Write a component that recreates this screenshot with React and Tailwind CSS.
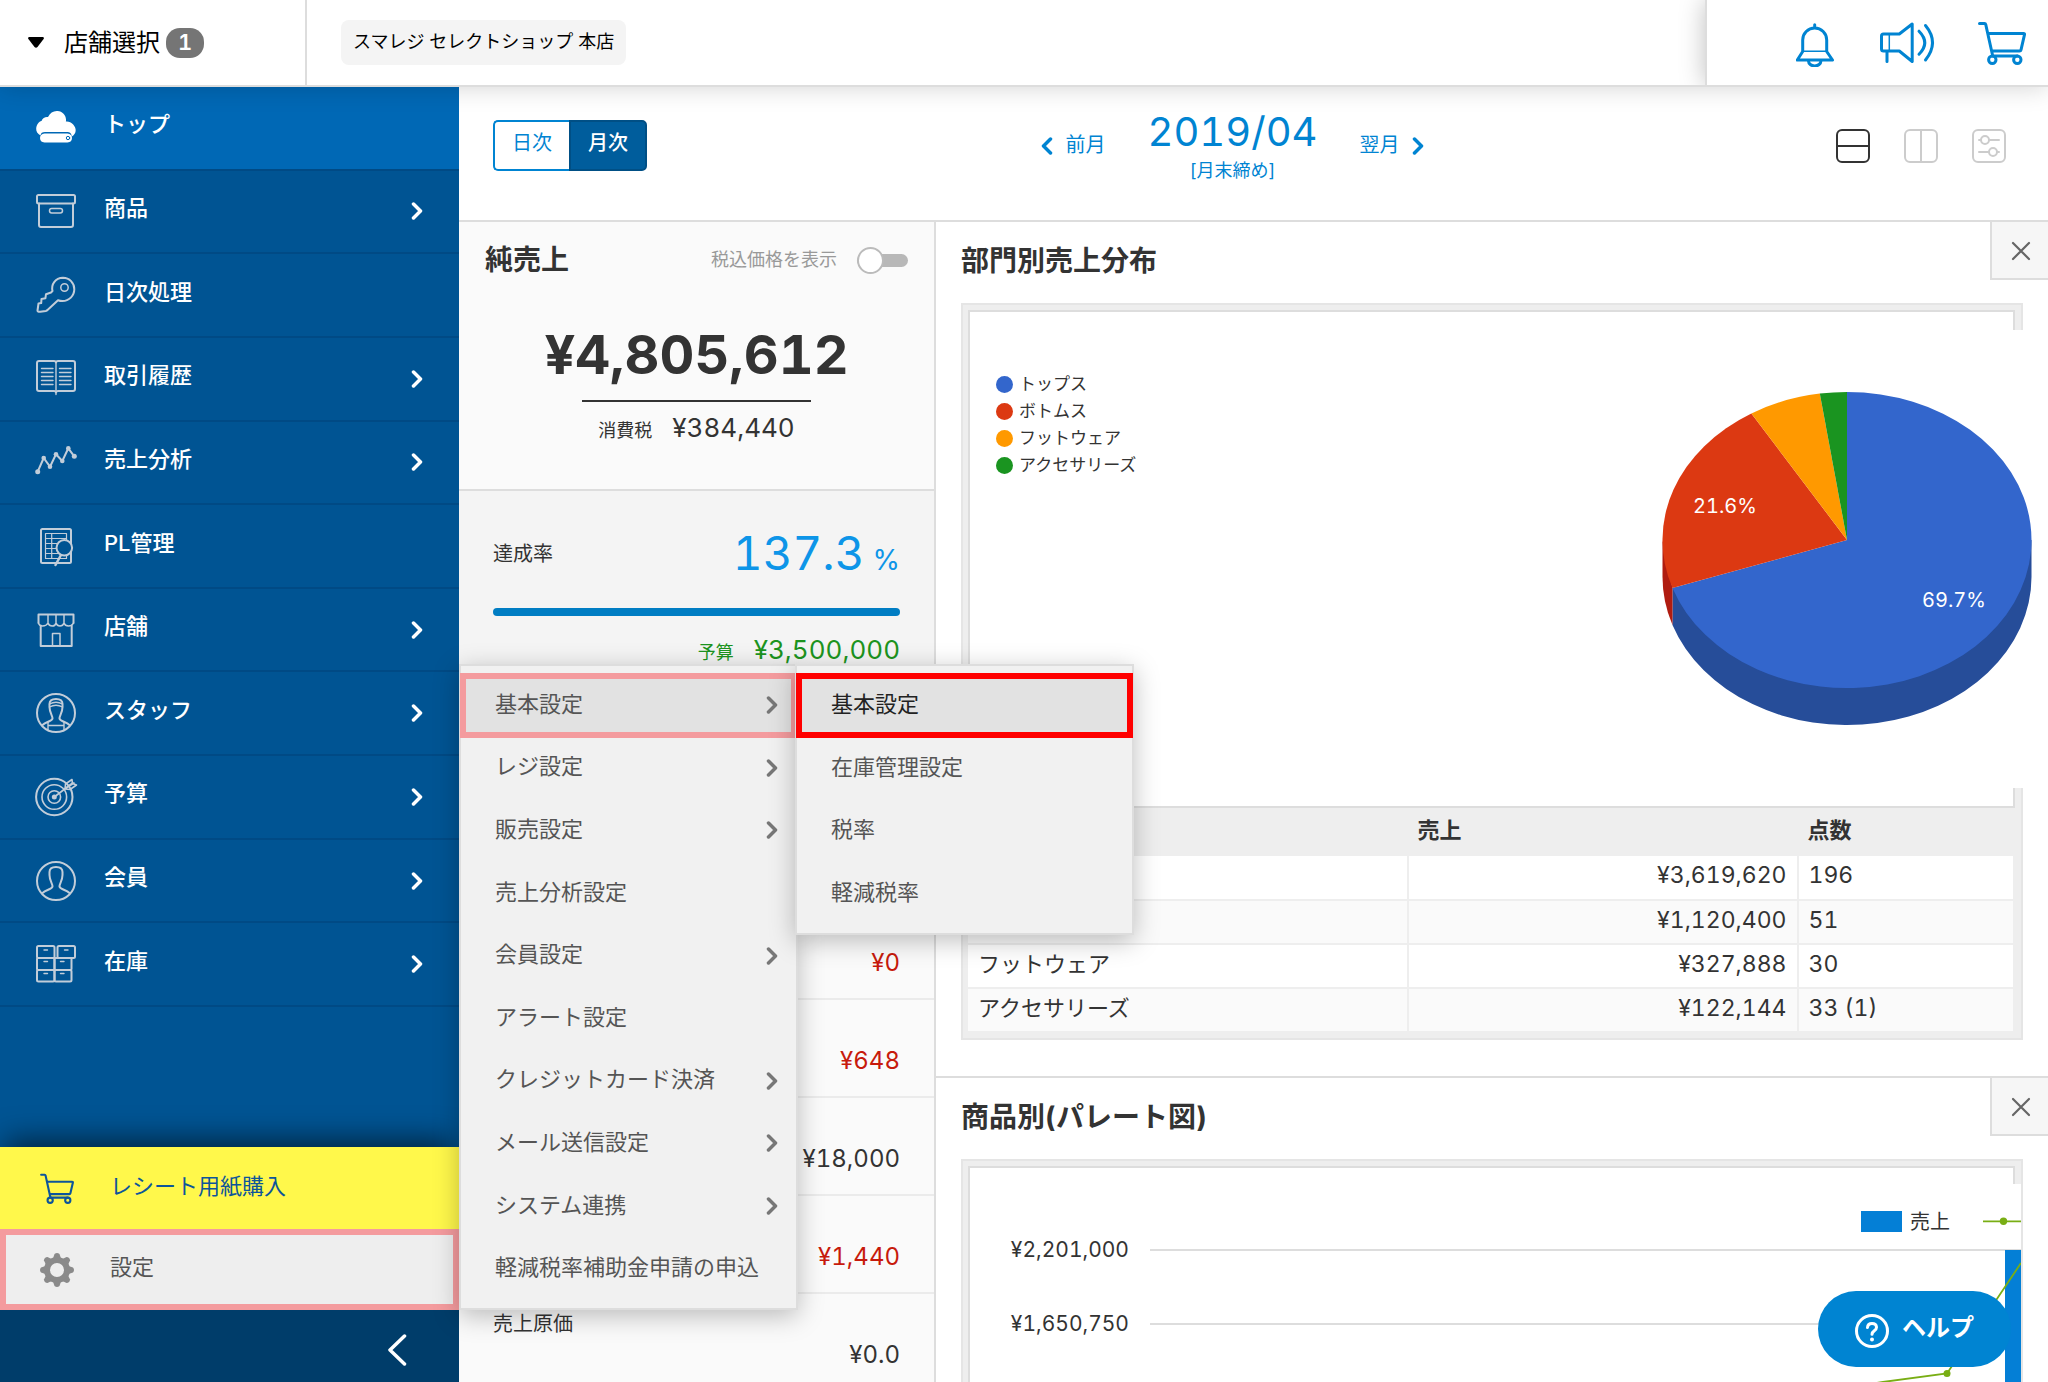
import React, { useState } from "react";

const CartIcon = ({ className }) => (
  <svg viewBox="0 0 48 44" className={className} fill="none" stroke="currentColor" strokeWidth="3" strokeLinecap="round" strokeLinejoin="round">
    <path d="M1.500 2.500h5q1 0 1.300 1.200L14.500 34M11 12.500h34.500q1.300 0 1 1.200L43 28.800q-.3 1.200-1.500 1.200H14M14.500 35h25" />
    <circle cx="14.300" cy="38.700" r="3.700" />
    <circle cx="39.300" cy="38.700" r="3.700" />
  </svg>
);

const BellIcon = () => (
  <svg viewBox="0 0 38 44" className="h-11 w-[38px]" fill="none" stroke="currentColor" strokeWidth="3" strokeLinecap="round" strokeLinejoin="round">
    <path d="M18.700 1.800v2.500M6.700 28.500V17a12 12 0 0 1 24 0v11.500l5.800 8.500H1.300z" />
    <path d="M7 28.300h23.500" strokeWidth="1.500" />
    <path d="M12.500 38a6.200 5 0 0 0 12.400 0" />
  </svg>
);

const SpeakerIcon = () => (
  <svg viewBox="0 0 54 42" className="h-[42px] w-[54px] overflow-visible" fill="none" stroke="currentColor" strokeWidth="3" strokeLinecap="round" strokeLinejoin="round">
    <path d="M20.300 12H4.500q-2 0-2 2v13q0 2 2 2h15.800l12.900 10.500V2zM8 30v9.500" />
    <path d="M10.300 12v17" strokeWidth="1.500" />
    <path d="M40 9.200q11.500 11.500 0 23M46.500 3.500q14 17 0 34.500" />
  </svg>
);

const Chevron = ({ className, width = 3.5 }) => (
  <svg viewBox="0 0 12 18" className={className} fill="none" stroke="currentColor" strokeWidth={width} strokeLinecap="round" strokeLinejoin="round">
    <path d="M2.500 2L9.500 9l-7 7" />
  </svg>
);

const icons = {
  top: (
    <g stroke="none" fill="#fff" transform="translate(0 3)">
      <path d="M4.500 24.500C1.500 22.800 0 20.500.2 17.500.5 13.500 3 10.500 5.500 10 6.500 7 9.500 5.500 12 6c2-4.300 5.500-6.300 9.500-6 5 .4 8.300 4 8.500 8.500 0 .8 0 1.300-.1 2 2.500-.3 5.300.6 7.300 3 3.800 4.300 3.200 9.300-1.400 12-.3-3.200-2-4.500-4.300-4.500H9c-2.700 0-4.200 1-4.500 3.500z" />
      <path d="M8.500 22.500h23q4.500.5 4.500 4.500t-4.500 4.500h-23Q4 31 4 27t4.500-4.500z" />
      <circle cx="32" cy="27" r="1.700" fill="none" stroke="#0068b5" strokeWidth="1" />
    </g>
  ),
  items: (
    <>
      <rect x="1" y="4" width="38" height="8.500" rx="1.500" />
      <path d="M3 12.500V34q0 2 2 2h30q2 0 2-2V12.500" />
      <rect x="13.500" y="17.500" width="13" height="4.500" rx="2.200" strokeWidth="1.500" />
    </>
  ),
  key: (
    <>
      <path d="M1.500 35.500l1-7 2.700-.4.300-4.200 3.900-.6.600-4.100 5-1.700 1.500-1.500C15 9.500 19 3 27 2.800c6.500 0 11.300 5 11.300 11.500S33 26 26.500 26c-2 0-3-.2-4.500-.8L11.500 35q-.6.700-1.700.9l-5.600.8q-2.700.3-2.700-1.200z" />
      <circle cx="28.500" cy="12.500" r="3.700" strokeWidth="1.500" />
    </>
  ),
  book: (
    <>
      <path d="M20 3.500Q20 2 18 2H3Q1 2 1 4v26q0 2 2 2h15q2 0 2 1.500Q20 32 22 32h15q2 0 2-2V4q0-2-2-2H22q-2 0-2 1.500z" />
      <path d="M20 3v32.500M5.500 9.500h11.500M5.500 13.500h11.500M5.500 17.500h11.500M5.500 21.500h11.500M5.500 25.500h11.500M23.500 9.500H35M23.500 13.500H35M23.500 17.500H35M23.500 21.500H35M23.500 25.500H35" strokeWidth="1.400" />
    </>
  ),
  trend: (
    <>
      <path d="M1.700 29.700L7.700 16 14 24.700l6-12.400 6.300 6.700 6-12.700 6 8" />
      <g fill="currentColor" stroke="none">
        <circle cx="1.700" cy="29.700" r="2.500" />
        <circle cx="7.700" cy="16" r="2.300" />
        <circle cx="14" cy="24.700" r="2.300" />
        <circle cx="20" cy="12.300" r="2.300" />
        <circle cx="26.300" cy="19" r="2.300" />
        <circle cx="32.300" cy="6.300" r="2.300" />
        <circle cx="38.300" cy="14.300" r="2.500" />
      </g>
    </>
  ),
  pl: (
    <>
      <rect x="5" y="3" width="30" height="34" rx="1.500" />
      <path d="M9.500 7.500h21v25h-21zM15.700 7.500v25M9.500 12.500h21M9.500 17.500h21M9.500 22.500h21M9.500 27.500h21" strokeWidth="1.200" />
      <circle cx="28.300" cy="21.700" r="7.800" fill="#005493" />
      <path d="M24.700 29.500L19.500 39" strokeWidth="2.500" />
    </>
  ),
  shop: (
    <>
      <path d="M2.500 13V4.500h35V13M4.700 15.500V36h31V15.500" />
      <path d="M2.500 13q.5 3 4 3 4 0 5.500-3 1 3 4.200 3T20 13q1 3 4 3t4-3q1 3 4.500 3t5-3M12 5v8M20 5v8M28 5v8M16.500 36V23.500h7.500V36" strokeWidth="1.500" />
    </>
  ),
  staff: (
    <>
      <circle cx="20" cy="20" r="19" />
      <path d="M6.500 32c3.500-3.500 9.500-3.500 10-6.500.3-2.500-3-5.500-3-11.500v-3c0-3.500 2.500-5 6.500-5s6.500 1.500 6.500 5v3c0 6-3.300 9-3 11.500.5 3 6.500 3 10 6.500" />
      <path d="M13.500 14q6.500-3.500 13 0M13.500 11q6.500-3.500 13 0M12 29v8.500M28 29v8.500M12 32.500h16" strokeWidth="1.400" />
    </>
  ),
  target: (
    <>
      <circle cx="18.300" cy="20" r="18.200" />
      <circle cx="18.300" cy="20" r="12.300" strokeWidth="1.600" />
      <circle cx="18.300" cy="20" r="6.300" strokeWidth="1.600" />
      <circle cx="18.300" cy="20" r="2.500" fill="currentColor" stroke="none" />
      <path d="M18.300 20L36.500 6" strokeWidth="1.600" />
      <path d="M29 12l.5-5L36 2.500l.5 4 4 1.500L34 12.500zM30 11l8-5" strokeWidth="1.600" />
    </>
  ),
  member: (
    <>
      <circle cx="20" cy="20" r="19" />
      <path d="M6.500 32c3.500-3.500 9.500-3.500 10-6.500.3-2.500-3-5.500-3-11.500v-3c0-3.500 2.500-5 6.500-5s6.500 1.500 6.500 5v3c0 6-3.300 9-3 11.500.5 3 6.500 3 10 6.500" />
    </>
  ),
  stock: (
    <>
      <rect x="1" y="2" width="17.500" height="12" rx="1.500" />
      <rect x="21.500" y="2" width="17.500" height="12" rx="1.500" />
      <rect x="1" y="14" width="17.500" height="12" rx="1" />
      <rect x="18.500" y="14" width="17" height="12" rx="1" />
      <rect x="1" y="26" width="17.500" height="11.500" rx="1.500" />
      <rect x="18.500" y="26" width="17" height="11.500" rx="1.500" />
      <path d="M8 6h3.500M28.500 6H32M8 17.500h3.500M24.500 17.500H28M8 29.500h3.500M24.500 29.500H28" strokeWidth="1.400" />
    </>
  )
};

const NAV = [
  { id: "top", text: "トップ", active: true },
  { id: "items", text: "商品", sub: true },
  { id: "key", text: "日次処理" },
  { id: "book", text: "取引履歴", sub: true },
  { id: "trend", text: "売上分析", sub: true },
  { id: "pl", text: "PL管理" },
  { id: "shop", text: "店舗", sub: true },
  { id: "staff", text: "スタッフ", sub: true },
  { id: "target", text: "予算", sub: true },
  { id: "member", text: "会員", sub: true },
  { id: "stock", text: "在庫", sub: true }
];

const SETTINGS = [
  { text: "基本設定", sub: true },
  { text: "レジ設定", sub: true },
  { text: "販売設定", sub: true },
  { text: "売上分析設定" },
  { text: "会員設定", sub: true },
  { text: "アラート設定" },
  { text: "クレジットカード決済", sub: true },
  { text: "メール送信設定", sub: true },
  { text: "システム連携", sub: true },
  { text: "軽減税率補助金申請の申込" }
];

const BASIC = ["基本設定", "在庫管理設定", "税率", "軽減税率"];

const SUMMARY = [
  { value: "¥0", minus: true },
  { value: "¥648", minus: true },
  { value: "¥18,000" },
  { value: "¥1,440", minus: true },
  { label: "売上原価", value: "¥0.0" }
];

const DEPARTMENTS = [
  { name: "トップス", sales: 3619620, count: "196", color: "#3366cc", side: "#264d99" },
  { name: "ボトムス", sales: 1120400, count: "51", color: "#dc3912", side: "#b01c10" },
  { name: "フットウェア", sales: 327888, count: "30", color: "#ff9900", side: "#bf7300" },
  { name: "アクセサリーズ", sales: 122144, count: "33 (1)", color: "#1a9420", side: "#0c7012" }
];

function Header() {
  return (
    <header className="relative z-20 flex h-[87px] shrink-0 items-stretch border-b-2 border-[#ddd] bg-white shadow-[0_0_24px_rgba(0,0,0,0.18)]">
      <button className="flex w-[307px] items-center border-r-2 border-[#ddd] pl-7 text-2xl text-black">
        <svg viewBox="0 0 16 11" className="h-[11px] w-4"><path d="M1 0h14q1.500.5.6 2L9.500 10q-1.500 1.500-3 0L.4 2Q-.5.5 1 0z" /></svg>
        <span className="ml-5">店舗選択</span>
        <span className="ml-1.5 flex h-[30px] w-[38px] items-center justify-center rounded-[14px] bg-[#757575] text-[22px] font-semibold text-white">1</span>
      </button>
      <div className="flex flex-1 items-center overflow-hidden pl-[34px]">
        <span className="rounded-lg bg-[#f4f4f4] px-3 pt-2 pb-[9px] text-lg leading-7 text-black">スマレジ セレクトショップ 本店</span>
      </div>
      <div className="flex w-[343px] items-center justify-end gap-[45px] border-l-2 border-[#ddd] pr-[22px] text-[#0084d2] shadow-[0_0_24px_rgba(0,0,0,0.25)] [clip-path:inset(0_0_0_-30px)]">
        <button aria-label="お知らせ" className="pt-1"><BellIcon /></button>
        <button aria-label="アナウンス"><SpeakerIcon /></button>
        <button aria-label="カート"><CartIcon className="h-11 w-12" /></button>
      </div>
    </header>
  );
}

function SettingsMenu() {
  return (
    <div className="absolute bottom-0 left-full w-[339px] border-2 border-[#ddd] bg-[#f1f1f1] py-2 text-[22px] text-[#555] shadow-[0_6px_24px_rgba(0,0,0,0.25)]">
      <ul className="flex h-[626px] flex-col">
        {SETTINGS.map((s, i) => (
          <li key={s.text} className="flex flex-1">
            <a href="#" className={`flex flex-1 items-center justify-between pr-[18px] pl-[34px] ${i === 0 ? "bg-[#e2e2e2] outline-[6px] -outline-offset-[5px] outline-[#f49b9e]" : ""}`}>
              <span className="pb-0.5 whitespace-nowrap">{s.text}</span>
              {s.sub && <Chevron className="h-[18px] w-3 text-[#777]" />}
            </a>
          </li>
        ))}
      </ul>
      <div className="absolute -top-0.5 left-full -ml-px w-[339px] border-2 border-[#ddd] bg-[#f1f1f1] py-2 shadow-[0_6px_24px_rgba(0,0,0,0.25)]">
        <ul className="flex h-[251px] flex-col">
          {BASIC.map((text, i) => (
            <li key={text} className="flex flex-1">
              <a href="#" className={`flex flex-1 items-center pb-0.5 pl-[34px] ${i === 0 ? "bg-[#e2e2e2] text-[#222] outline-[6px] -outline-offset-[5px] outline-[#f00]" : ""}`}>{text}</a>
            </li>
          ))}
        </ul>
      </div>
    </div>
  );
}

function Sidebar() {
  return (
    <aside className="relative z-10 flex w-[459px] shrink-0 flex-col bg-[#005493] text-[22px]">
      <ul className="flex h-[920px] shrink-0 flex-col">
        {NAV.map(n => (
          <li key={n.id} className={`flex flex-1 border-b-2 border-[#004a85] ${n.active ? "bg-[#0068b5]" : ""}`}>
            <a href="#" className="flex flex-1 items-center pr-9 pl-9 font-medium text-white">
              <svg viewBox="0 0 40 40" className="h-10 w-10 overflow-visible text-[#c2cdd9]" fill="none" stroke="currentColor" strokeWidth="2" strokeLinecap="round" strokeLinejoin="round">
                {icons[n.id]}
              </svg>
              <span className="ml-7 flex-1 pb-1.5">{n.text}</span>
              {n.sub && <Chevron className="h-[18px] w-3" />}
            </a>
          </li>
        ))}
      </ul>
      <div className="flex-1" />
      <a href="#" className="flex h-[82px] items-center bg-[#fff84b] pl-10 text-[#0d559a] shadow-[0_-12px_30px_-6px_rgba(0,0,0,0.6)]">
        <CartIcon className="h-[31px] w-[34px]" />
        <span className="ml-9 pb-1">レシート用紙購入</span>
      </a>
      <div className="relative">
        <a href="#" className="flex h-[81px] items-center border-[6px] border-[#f49b9e] bg-[#eee] pl-[34px] text-[#555]">
          <svg viewBox="-17 -17 34 34" className="h-[34px] w-[34px] text-[#8a8a8a]" fill="none" stroke="currentColor">
            <circle r="10" strokeWidth="6" />
            {[0, 45, 90, 135, 180, 225, 270, 315].map(a => (
              <path key={a} d="M-4-11.500L-2.500-16q2.500-2 5 0L4-11.500z" fill="currentColor" stroke="none" transform={`rotate(${a})`} />
            ))}
          </svg>
          <span className="ml-9 pb-1">設定</span>
        </a>
        <SettingsMenu />
      </div>
      <div className="flex h-[72px] items-center justify-end bg-[#003d6a] pr-[52px] pt-2">
        <button aria-label="メニューを閉じる">
          <svg viewBox="0 0 20 32" className="h-8 w-5" fill="none" stroke="#fff" strokeWidth="3.500" strokeLinecap="round" strokeLinejoin="round"><path d="M17.500 2L3 16l14.500 14" /></svg>
        </button>
      </div>
    </aside>
  );
}

function Toolbar() {
  return (
    <div className="grid h-[135px] shrink-0 grid-cols-[1fr_auto_1fr] border-b-2 border-[#ddd] pr-[42px] text-[#0084d2]">
      <div className="pt-[33px] pl-[34px]">
        <div className="flex h-[51px] w-[154px] text-xl">
          <button className="flex-1 rounded-l-[5px] border-2 border-r-0 border-[#0084d2] pb-1.5">日次</button>
          <button className="flex-1 rounded-r-[5px] border-2 border-[#004f85] bg-[#005d9c] pb-1.5 font-medium text-white">月次</button>
        </div>
      </div>
      <div className="flex items-start">
        <a href="#" className="mt-11 flex items-center text-xl">
          <Chevron className="h-[18px] w-3 rotate-180" />
          <span className="ml-3 pb-0.5">前月</span>
        </a>
        <div className="mx-[42px] pt-6 text-center">
          <div className="text-[40px] leading-[42px]">2019/04</div>
          <div className="mt-1.5 text-lg leading-6">[月末締め]</div>
        </div>
        <a href="#" className="mt-11 flex items-center text-xl">
          <span className="mr-3 pb-0.5">翌月</span>
          <Chevron className="h-[18px] w-3" />
        </a>
      </div>
      <div className="flex items-start justify-end gap-[34px] pt-[42px]">
        <button aria-label="1列表示">
          <svg viewBox="0 0 34 34" className="h-[34px] w-[34px]" fill="none" stroke="#333" strokeWidth="2"><rect x="1" y="1" width="32" height="32" rx="5" /><path d="M1 17h32" /></svg>
        </button>
        <button aria-label="2列表示">
          <svg viewBox="0 0 34 34" className="h-[34px] w-[34px]" fill="none" stroke="#ccc" strokeWidth="2"><rect x="1" y="1" width="32" height="32" rx="5" /><path d="M17 1v32" /></svg>
        </button>
        <button aria-label="表示設定">
          <svg viewBox="0 0 34 34" className="h-[34px] w-[34px]" fill="none" stroke="#ccc" strokeWidth="2" strokeLinecap="round"><rect x="1" y="1" width="32" height="32" rx="5" /><path d="M7 11h2M17 11h10M7 23h10M25 23h2" /><circle cx="13" cy="11" r="4" /><circle cx="21" cy="23" r="4" /></svg>
        </button>
      </div>
    </div>
  );
}

function SalesColumn() {
  const [withTax, setWithTax] = useState(false);
  return (
    <section className="w-[477px] shrink-0 border-r-2 border-[#ddd] bg-[#fafafa] text-[#333]">
      <div className="h-[269px] border-b-2 border-[#ddd] pt-5">
        <div className="flex items-center justify-between pr-[26px] pl-[26px]">
          <h2 className="text-[28px] leading-[36px] font-bold">純売上</h2>
          <label className="flex cursor-pointer items-center text-lg text-[#999]">
            税込価格を表示
            <input type="checkbox" className="sr-only" checked={withTax} onChange={e => setWithTax(e.target.checked)} />
            <span className={`ml-5 flex h-[13px] w-[51px] items-center rounded-full bg-[#b8b8b8] ${withTax ? "justify-end" : ""}`}>
              <span className="h-[27px] w-[27px] rounded-full border-2 border-[#bbb] bg-white" />
            </span>
          </label>
        </div>
        <div className="mt-[47px] text-center text-[54px] leading-[60px] font-bold">¥4,805,612</div>
        <div className="mx-auto mt-[15px] w-[229px] border-t-2 border-[#333]" />
        <div className="mt-2 flex items-baseline justify-center gap-5 leading-9">
          <span className="text-lg">消費税</span>
          <span className="text-[26px]">¥384,440</span>
        </div>
      </div>
      <div className="h-[411px] border-b-2 border-[#ebebeb] bg-[#f4f4f4] px-[34px] pt-8">
        <div className="flex h-[66px] items-center justify-between">
          <span className="pb-1 text-xl">達成率</span>
          <span className="flex items-baseline gap-2 leading-[64px] text-[#0d95e8]">
            <span className="text-[46px]">137.3</span>
            <span className="text-[28px]">%</span>
          </span>
        </div>
        <div className="mt-[19px] h-2 rounded-full bg-[#007dc3]" />
        <div className="mt-4 flex items-baseline justify-end gap-5 leading-9 text-[#1c9420]">
          <span className="text-lg">予算</span>
          <span className="text-[26px]">¥3,500,000</span>
        </div>
      </div>
      {SUMMARY.map(s => (
        <div key={s.value} className="flex h-[98px] flex-col justify-between border-b-2 border-[#ebebeb] px-[34px] pt-[18px] pb-[21px]">
          <span className="h-6 text-xl leading-6">{s.label}</span>
          <span className={`text-right text-2xl leading-7 ${s.minus ? "text-[#c71a0c]" : ""}`}>{s.value}</span>
        </div>
      ))}
    </section>
  );
}

function Panel({ title, className, children }) {
  return (
    <section className={`border-b-2 border-[#ddd] pr-[25px] pl-[25px] ${className || ""}`}>
      <div className="-mr-[25px] flex items-start justify-between">
        <h2 className="pt-5 text-[28px] leading-[38px] font-bold">{title}</h2>
        <button aria-label="閉じる" className="flex h-[58px] w-[58px] items-center justify-center border-b-2 border-l-2 border-[#ddd] bg-[#f6f6f6] pt-px pl-px">
          <svg viewBox="0 0 20 20" className="h-5 w-5" stroke="#666" strokeWidth="2.200" strokeLinecap="round"><path d="M2 2l16 16M18 2L2 18" /></svg>
        </button>
      </div>
      <div className="mt-[23px]">{children}</div>
    </section>
  );
}

const CX = 185;
const CY = 148;
const RX = 184.5;
const RY = 148;
const DEPTH = 37;
const point = f => [CX + RX * Math.sin(f * 2 * Math.PI), CY - RY * Math.cos(f * 2 * Math.PI)];

function PieChart() {
  const total = DEPARTMENTS.reduce((sum, d) => sum + d.sales, 0);
  let acc = 0;
  const slices = DEPARTMENTS.map(d => {
    const from = acc;
    acc += d.sales / total;
    const [x1, y1] = point(from);
    const [x2, y2] = point(acc);
    return {
      color: d.color,
      end: [x2, y2],
      d: `M${CX} ${CY}L${x1} ${y1}A${RX} ${RY} 0 ${acc - from > 0.5 ? 1 : 0} 1 ${x2} ${y2}Z`
    };
  });
  const [ex, ey] = slices[0].end;
  return (
    <svg viewBox="0 0 370 335" className="mt-[62px] h-[335px] w-[370px]">
      {/* rim below the front edge */}
      <path d={`M${CX + RX} ${CY}v${DEPTH}A${RX} ${RY} 0 0 1 ${ex} ${ey + DEPTH}V${ey}Z`} fill={DEPARTMENTS[0].side} />
      <path d={`M${CX - RX} ${CY}v${DEPTH}A${RX} ${RY} 0 0 0 ${ex} ${ey + DEPTH}V${ey}Z`} fill={DEPARTMENTS[1].side} />
      {slices.map(s => <path key={s.color} d={s.d} fill={s.color} />)}
      <g fill="#fff" fontSize="20" textAnchor="middle">
        <text x="63" y="121">21.6%</text>
        <text x="292" y="215">69.7%</text>
      </g>
    </svg>
  );
}

function DepartmentPanel() {
  return (
    <Panel title="部門別売上分布" className="h-[856px]">
      <div className="border-2 border-[#e5e5e5] bg-[#eee] p-[5px]">
        <div className="mr-px border-2 border-[#ddd] bg-white py-[18px]">
          <div className="relative -mr-[35px] flex h-[458px] justify-between bg-white pr-[16px] pl-[26px]">
            <ul className="pt-[41px] text-[17px] leading-[27px]">
              {DEPARTMENTS.map(d => (
                <li key={d.name} className="flex items-center gap-1.5">
                  <span className="h-[17px] w-[17px] rounded-full" style={{ background: d.color }} />
                  {d.name}
                </li>
              ))}
            </ul>
            <PieChart />
          </div>
        </div>
        <table className="w-full border-r-[3px] border-[#eee] text-[23px]">
          <thead>
            <tr className="h-12 text-left text-[22px]">
              <th className="w-[42%] px-2.5 font-bold">部門</th>
              <th className="px-2.5 pb-1 font-bold">売上</th>
              <th className="w-[217px] px-2.5 pb-1 font-bold">点数</th>
            </tr>
          </thead>
          <tbody>
            {DEPARTMENTS.map((d, i) => (
              <tr key={d.name} className={`h-11 border-b-2 border-[#eee] ${i % 2 ? "bg-[#fafafa]" : "bg-white"}`}>
                <td className="px-2.5 pb-1 text-[22px]">{d.name}</td>
                <td className="border-x-2 border-[#eee] px-2.5 pb-1 text-right">¥{d.sales.toLocaleString("en-US")}</td>
                <td className="px-2.5 pb-1">{d.count}</td>
              </tr>
            ))}
          </tbody>
        </table>
      </div>
    </Panel>
  );
}

function ParetoPanel() {
  return (
    <Panel title="商品別(パレート図)">
      <div className="overflow-hidden border-2 border-[#e5e5e5] bg-[#eee] p-[5px]">
        <div className="mr-px border-2 border-[#ddd] bg-white pt-[16px]">
          <svg className="-mr-2 h-[400px] w-[calc(100%+8px)] bg-white">
            <g stroke="#ddd" strokeWidth="2">
              <line x1="180" y1="66" x2="100%" y2="66" />
              <line x1="180" y1="140" x2="100%" y2="140" />
            </g>
            <g fill="#333" fontSize="21" textAnchor="end">
              <text x="159" y="73">¥2,201,000</text>
              <text x="159" y="147">¥1,650,750</text>
            </g>
            <svg x="100%" overflow="visible">
              <rect x="-160" y="27" width="41" height="21" fill="#047fd6" />
              <text x="-111" y="45" fill="#333" fontSize="20">売上</text>
              <rect x="-16" y="66" width="16" height="330" fill="#047fd6" />
              <g stroke="#79ae14" strokeWidth="1.800" fill="none">
                <path d="M-38 37.300H0M0 79L-74 189.500-138 198-300 222" />
              </g>
              <g fill="#79ae14">
                <circle cx="-17.500" cy="37.300" r="3.700" />
                <circle cx="-74" cy="189.500" r="3.500" />
              </g>
            </svg>
          </svg>
        </div>
      </div>
    </Panel>
  );
}

export default function App() {
  return (
    <div className="relative flex h-screen flex-col overflow-hidden bg-white font-['Inter','Noto_Sans_CJK_JP',sans-serif] text-[#333] tabular-nums">
      <Header />
      <div className="flex min-h-0 flex-1">
        <Sidebar />
        <main className="flex min-w-0 flex-1 flex-col overflow-hidden">
          <Toolbar />
          <div className="flex min-h-0 flex-1">
            <SalesColumn />
            <div className="min-w-0 flex-1 overflow-hidden">
              <DepartmentPanel />
              <ParetoPanel />
            </div>
          </div>
        </main>
      </div>
      <button className="absolute right-[37px] bottom-[15px] z-20 flex h-[76px] w-[193px] items-center rounded-full bg-[#0084d2] pl-[37px] text-2xl font-bold text-white">
        <svg viewBox="0 0 34 34" className="mt-1 h-[34px] w-[34px]" fill="none" stroke="#fff" strokeWidth="3" strokeLinecap="round">
          <circle cx="17" cy="17" r="15.500" />
          <path d="M12.500 13.500q.3-4 4.500-4t4.500 3.700q0 2-2.200 3.600T17 20.300" />
          <circle cx="17" cy="25.500" r="2" fill="#fff" stroke="none" />
        </svg>
        <span className="ml-[13px] pb-0.5">ヘルプ</span>
      </button>
    </div>
  );
}
